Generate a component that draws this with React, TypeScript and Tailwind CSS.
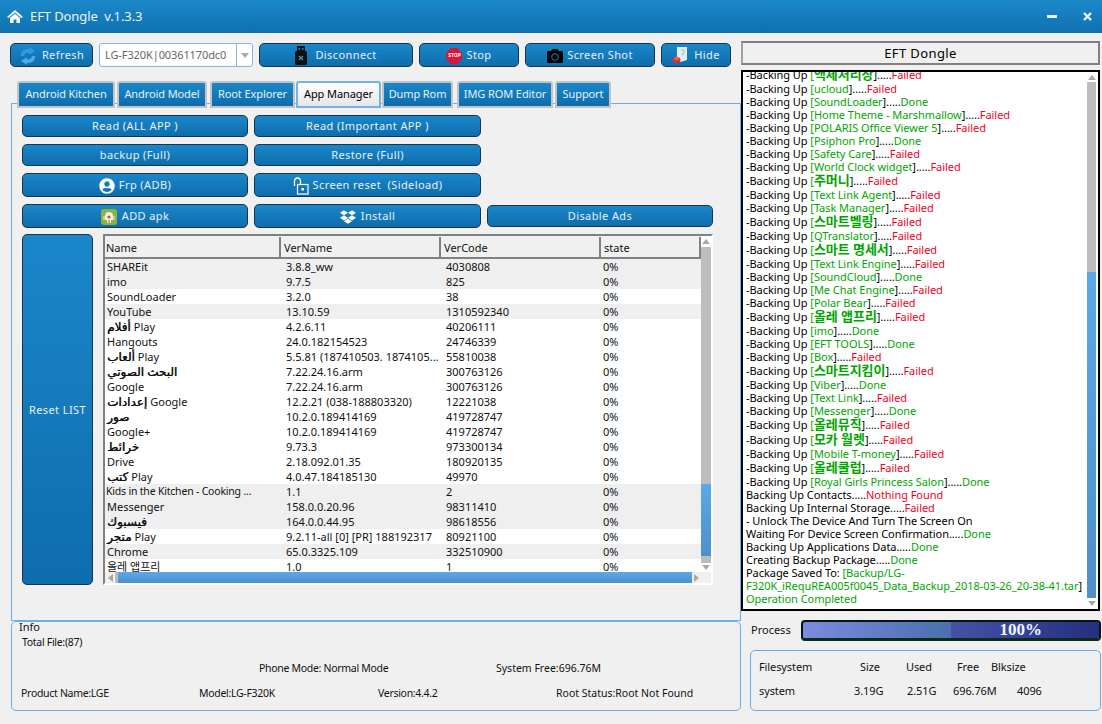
import { FaCamera, FaDropbox, FaUserCircle } from "react-icons/fa";

const font = "[font-family:'Noto_Sans','DejaVu_Sans','Noto_Sans_CJK_KR',sans-serif]";

const tabs = [
  { label: "Android Kitchen", w: "w-[98px] mr-[2px]" },
  { label: "Android Model", w: "w-[90px] mr-[3px]" },
  { label: "Root Explorer", w: "w-[85px] mr-[1px]" },
  { label: "App Manager", w: "w-[85px] mr-[1px]", active: true },
  { label: "Dump Rom", w: "w-[71px] mr-[4px]" },
  { label: "IMG ROM Editor", w: "w-[96px] mr-[2px]" },
  { label: "Support", w: "w-[56px]" },
];

const rows = [
  ["SHAREit", "3.8.8_ww", "4030808", "g"],
  ["imo", "9.7.5", "825", "g"],
  ["SoundLoader", "3.2.0", "38", "w"],
  ["YouTube", "13.10.59", "1310592340", "g"],
  ["أفلام Play", "4.2.6.11", "40206111", "w"],
  ["Hangouts", "24.0.182154523", "24746339", "w"],
  ["ألعاب Play", "5.5.81 (187410503. 1874105...", "55810038", "w"],
  ["البحث الصوتي", "7.22.24.16.arm", "300763126", "w"],
  ["Google", "7.22.24.16.arm", "300763126", "w"],
  ["إعدادات Google", "12.2.21 (038-188803320)", "12221038", "w"],
  ["صور", "10.2.0.189414169", "419728747", "w"],
  ["Google+", "10.2.0.189414169", "419728747", "w"],
  ["خرائط", "9.73.3", "973300134", "w"],
  ["Drive", "2.18.092.01.35", "180920135", "w"],
  ["كتب Play", "4.0.47.184185130", "49970", "w"],
  ["Kids in the Kitchen - Cooking ...", "1.1", "2", "g"],
  ["Messenger", "158.0.0.20.96", "98311410", "g"],
  ["فيسبوك", "164.0.0.44.95", "98618556", "g"],
  ["متجر Play", "9.2.11-all [0] [PR] 188192317", "80921100", "w"],
  ["Chrome", "65.0.3325.109", "332510900", "g"],
  ["올레 앱프리", "1.0", "1", "w"],
];

// name, status; korean names render larger in the log
const backups: [string, string, boolean?][] = [
  ["액체처리장", "Failed", true],
  ["ucloud", "Failed"],
  ["SoundLoader", "Done"],
  ["Home Theme - Marshmallow", "Failed"],
  ["POLARIS Office Viewer 5", "Failed"],
  ["Psiphon Pro", "Done"],
  ["Safety Care", "Failed"],
  ["World Clock widget", "Failed"],
  ["주머니", "Failed", true],
  ["Text Link Agent", "Failed"],
  ["Task Manager", "Failed"],
  ["스마트벨링", "Failed", true],
  ["QTranslator", "Failed"],
  ["스마트 명세서", "Failed", true],
  ["Text Link Engine", "Failed"],
  ["SoundCloud", "Done"],
  ["Me Chat Engine", "Failed"],
  ["Polar Bear", "Failed"],
  ["올레 앱프리", "Failed", true],
  ["imo", "Done"],
  ["EFT TOOLS", "Done"],
  ["Box", "Failed"],
  ["스마트지킴이", "Failed", true],
  ["Viber", "Done"],
  ["Text Link", "Failed"],
  ["Messenger", "Done"],
  ["올레뮤직", "Failed", true],
  ["모카 월렛", "Failed", true],
  ["Mobile T-money", "Failed"],
  ["올레쿨럽", "Failed", true],
  ["Royal Girls Princess Salon", "Done"],
];

function Status({ s }: { s: string }) {
  return <span className={s === "Done" ? "text-[#00a600]" : "text-[#f4001c]"}>{s}</span>;
}

function Btn({ children, className = "" }: { children: React.ReactNode; className?: string }) {
  return (
    <button className={`flex items-center justify-center whitespace-pre rounded-[5px] border border-[#1d3446] bg-gradient-to-b from-[#1a87ca] to-[#0e6dac] pt-[1px] text-[11px] tracking-[0.4px] text-[#e6f1f8] ${className}`}>
      {children}
    </button>
  );
}

function Arrow({ dir }: { dir: "up" | "down" | "left" | "right" }) {
  const cls = {
    up: "border-x-[4px] border-b-[5px] border-x-transparent border-b-[#a8a8a8]",
    down: "border-x-[4px] border-t-[5px] border-x-transparent border-t-[#a8a8a8]",
    left: "border-y-[4px] border-r-[5px] border-y-transparent border-r-[#a8a8a8]",
    right: "border-y-[4px] border-l-[5px] border-y-transparent border-l-[#a8a8a8]",
  }[dir];
  return <div className={`h-0 w-0 ${cls}`} />;
}

function RefreshIcon() {
  return (
    <svg width="18" height="18" viewBox="0 0 18 18" className="mr-[5px]">
      <path d="M2 9 L2 7 Q3 2 9 2 L10 2 L10 0 L16 4 L10 8 L10 6 Q6 5 5 9 Z" fill="#2e9ae0" />
      <path d="M16 9 L16 11 Q15 16 9 16 L8 16 L8 18 L2 14 L8 10 L8 12 Q12 13 13 9 Z" fill="#4aa9e8" />
    </svg>
  );
}

function UsbIcon() {
  return (
    <svg width="12" height="19" viewBox="0 0 12 19" className="mr-[8px]">
      <rect x="2" y="0" width="8" height="6" fill="#111" />
      <rect x="3.5" y="2" width="1.6" height="2" fill="#1a80c2" />
      <rect x="6.9" y="2" width="1.6" height="2" fill="#1a80c2" />
      <rect x="0" y="5" width="12" height="14" rx="1.5" fill="#111" />
      <path d="M4 10 L8 14 M8 10 L4 14" stroke="#4a90c0" strokeWidth="1.3" />
    </svg>
  );
}

function StopIcon() {
  return (
    <div className="relative mr-[4px] flex h-[16px] w-[16px] items-center justify-center">
      <svg width="16" height="16" viewBox="0 0 16 16" className="absolute inset-0">
        <path d="M5 0 H11 L16 5 V11 L11 16 H5 L0 11 V5 Z" fill="#dc1437" />
      </svg>
      <span className="relative text-[5px] leading-none font-bold tracking-normal text-white">STOP</span>
    </div>
  );
}

function HideIcon() {
  return (
    <svg width="16" height="17" viewBox="0 0 16 17" className="mr-[6px]">
      <path d="M5 0 H15 V13 L8 15 H5 Z" fill="#e4ecf6" />
      <path d="M9 3 Q12 2 12 5 Q12 6.5 10.5 7 V8.5" stroke="#a8bcd4" strokeWidth="1.2" fill="none" />
      <ellipse cx="4.5" cy="13" rx="4" ry="3" fill="#d8302a" />
      <ellipse cx="4.5" cy="11.5" rx="2.5" ry="1.8" fill="#f06050" />
    </svg>
  );
}

function UnlockIcon() {
  return (
    <svg width="16" height="18" viewBox="0 0 16 18" className="mr-[4px]">
      <path d="M1.5 9 V4.5 Q1.5 1 4.5 1 Q7.5 1 7.5 4.5 V7" stroke="#fff" strokeWidth="1.3" fill="none" />
      <rect x="4.5" y="7.5" width="10.5" height="9.5" stroke="#fff" strokeWidth="1.2" fill="none" />
      <rect x="8.5" y="11" width="2.5" height="2.5" fill="#fff" />
    </svg>
  );
}

function ApkIcon() {
  return (
    <svg width="16" height="16" viewBox="0 0 16 16" className="mr-[5px]">
      <rect width="16" height="16" rx="3" fill="#8cb33c" />
      <path d="M4 7 Q4 3 8 3 Q12 3 12 7 V11 H4 Z" fill="#f2f2e8" />
      <rect x="2.5" y="7" width="1" height="4" fill="#f2f2e8" />
      <rect x="12.5" y="7" width="1" height="4" fill="#f2f2e8" />
      <rect x="6" y="11" width="1.2" height="3" fill="#f2f2e8" />
      <rect x="8.8" y="11" width="1.2" height="3" fill="#f2f2e8" />
      <circle cx="8" cy="8" r="1.6" fill="#d8483c" />
    </svg>
  );
}

// arabic parts look heavier than the latin ones in the list
function AppName({ name }: { name: string }) {
  const parts = name.split(/([\u0600-\u06ff][\u0600-\u06ff ]*)/).filter(Boolean);
  return (
    <>
      {parts.map((p, i) =>
        /[\u0600-\u06ff]/.test(p) ? (
          <span key={i} className="text-[12px] [text-shadow:0.4px_0_0_#111]">{p}</span>
        ) : (
          <span key={i}>{p}</span>
        )
      )}
    </>
  );
}

function AppTable() {
  return (
    <div className="flex h-[351px] w-[610px] flex-col border-t-2 border-r-2 border-b-2 border-l-2 border-t-[#808080] border-r-white border-b-white border-l-[#808080] text-[11px] leading-[15px] text-[#111]">
      <div className="flex min-h-0 flex-1">
        <div className="w-[596px]">
          <div className="flex h-[23px] border-b-2 border-[#808080] bg-[#f0f0f0] pt-[1px]">
            <div className="flex w-[176px] items-center border-r-2 border-[#808080] pl-[1px]">Name</div>
            <div className="flex w-[160px] items-center border-r-2 border-[#808080] pl-[3px]">VerName</div>
            <div className="flex w-[160px] items-center border-r-2 border-[#808080] pl-[3px]">VerCode</div>
            <div className="flex w-[100px] items-center border-r-2 border-[#808080] pl-[3px]">state</div>
          </div>
          {rows.map((r, i) => (
            <div key={i} className={`flex h-[15px] whitespace-nowrap ${r[3] === "g" ? "bg-[#efefef]" : "bg-white"}`}>
              {i === 15 ? (
                <div className="w-[181px] overflow-hidden pl-[1px] text-[10.5px] tracking-[-0.2px]">{r[0]}</div>
              ) : (
                <div className="w-[181px] overflow-hidden pl-[2px]"><AppName name={r[0]} /></div>
              )}
              <div className="w-[160px] overflow-hidden">{r[1]}</div>
              <div className="w-[157px] overflow-hidden">{r[2]}</div>
              <div className="w-[98px]">0%</div>
            </div>
          ))}
        </div>
        <div className="flex w-[10px] flex-col bg-[#bdbdbd]">
          <div className="flex h-[11px] items-center justify-center bg-white"><Arrow dir="up" /></div>
          <div className="h-[237px]" />
          <div className="h-[72px] bg-gradient-to-b from-[#5aa9ea] to-[#4d90cc]" />
          <div className="h-[7px]" />
          <div className="flex flex-1 items-center justify-center bg-white"><Arrow dir="down" /></div>
        </div>
      </div>
      <div className="flex h-[11px] w-[596px] items-center bg-[#f0f0f0]">
        <div className="flex w-[10px] justify-center"><Arrow dir="left" /></div>
        <div className="h-full w-[3px] bg-[#bdbdbd]" />
        <div className="h-full w-[574px] bg-gradient-to-b from-[#5aa9ea] to-[#4d90cc]" />
        <div className="flex flex-1 justify-center"><Arrow dir="right" /></div>
      </div>
    </div>
  );
}

function LogLine({ children, kr }: { children: React.ReactNode; kr?: boolean }) {
  return <div className={`flex items-center whitespace-pre ${kr ? "h-[15px]" : "h-[13px]"}`}><span>{children}</span></div>;
}

function Log() {
  return (
    <div className="mt-[5px] flex h-[541px] w-[359px] border-2 border-black bg-white">
      <div className="w-[346px] overflow-hidden pl-[3px] text-[11px] leading-[13px] tracking-[-0.05px] text-black">
        <div className="-mt-[5px]">
          {backups.map(([name, status, kr], i) => (
            <LogLine key={i} kr={kr}>
              -Backing Up <span className="text-[#00a600]">[<span className={kr ? "text-[13px] font-bold" : ""}>{name}</span></span>].....<Status s={status} />
            </LogLine>
          ))}
          <LogLine>Backing Up Contacts.....<span className="text-[#f4001c]">Nothing Found</span></LogLine>
          <LogLine>Backing Up Internal Storage.....<Status s="Failed" /></LogLine>
          <LogLine>- Unlock The Device And Turn The Screen On</LogLine>
          <LogLine>Waiting For Device Screen Confirmation.....<Status s="Done" /></LogLine>
          <LogLine>Backing Up Applications Data.....<Status s="Done" /></LogLine>
          <LogLine>Creating Backup Package.....<Status s="Done" /></LogLine>
          <LogLine>Package Saved To: <span className="text-[#00a600]">[Backup/LG-</span></LogLine>
          <LogLine><span className="text-[#00a600]">F320K_iRequREA005f0045_Data_Backup_2018-03-26_20-38-41.tar</span>]</LogLine>
          <LogLine><span className="text-[#00a600]">Operation Completed</span></LogLine>
        </div>
      </div>
      <div className="flex w-[9px] flex-col bg-[#bdbdbd]">
        <div className="flex h-[10px] items-center justify-center bg-white"><Arrow dir="up" /></div>
        <div className="h-[190px]" />
        <div className="flex-1 bg-gradient-to-b from-[#5aa9ea] to-[#4d90cc]" />
        <div className="flex h-[11px] items-center justify-center bg-white"><Arrow dir="down" /></div>
      </div>
      <div className="w-[2px]" />
    </div>
  );
}

export default function App() {
  return (
    <div className={`flex h-[724px] w-[1102px] flex-col overflow-hidden bg-[#f0f0f0] ${font}`}>
      {/* title bar */}
      <div className="flex h-[33px] items-center bg-gradient-to-b from-[#1c89ca] to-[#0f71b0] text-white">
        <svg width="16" height="13" viewBox="0 0 16 13" className="ml-[7px] -mt-[1px]">
          <path d="M8 0 L16 7 L14.5 8 L8 2.5 L1.5 8 L0 7 Z M3 8 L8 3.8 L13 8 V13 H9.5 V9.5 H6.5 V13 H3 Z" fill="#fff" />
        </svg>
        <span className="ml-[7px] whitespace-pre text-[13px] tracking-[-0.1px] text-[#e8f3fa]">EFT Dongle  v.1.3.3</span>
        <div className="ml-auto mr-[26px] h-[3px] w-[10px] bg-[#e8f3fa]" />
        <svg width="9" height="9" viewBox="0 0 9 9" className="mr-[10px]">
          <path d="M1 1 L8 8 M8 1 L1 8" stroke="#eef6fb" strokeWidth="2.4" />
        </svg>
      </div>

      <div className="flex flex-1">
        {/* left column */}
        <div className="flex w-[741px] flex-col pt-[10px]">
          <div className="flex h-[24px] gap-[6px] pl-[10px]">
            <Btn className="w-[83px]"><RefreshIcon />Refresh</Btn>
            <div className="flex w-[154px] items-center rounded-[3px] border border-[#7fb8e8] bg-white text-[11px] tracking-[-0.1px] text-[#666]">
              <div className="w-[136px] pr-[10px] pl-[5px]">
                <div className="overflow-hidden whitespace-nowrap">LG-F320K|00361170dc0t</div>
              </div>
              <div className="flex h-full flex-1 items-center justify-center border-l border-[#7fb8e8]"><Arrow dir="down" /></div>
            </div>
            <Btn className="w-[154px]"><UsbIcon />Disconnect</Btn>
            <Btn className="w-[100px]"><StopIcon />Stop</Btn>
            <Btn className="w-[130px]"><FaCamera className="mr-[4px] text-[16px] text-black" />Screen Shot</Btn>
            <Btn className="w-[70px]"><HideIcon />Hide</Btn>
          </div>

          <div className="relative z-10 mt-[14px] flex h-[27px] pl-[17px]">
            {tabs.map((t) =>
              t.active ? (
                <div key={t.label} className={`${t.w} flex items-center justify-center rounded-t-[3px] border-2 border-[#72b2e8] bg-gradient-to-b from-white to-[#e6e6e6] text-[11px] tracking-[-0.1px] text-black`}>
                  {t.label}
                </div>
              ) : (
                <div key={t.label} className={`${t.w} flex items-center justify-center rounded-t-[3px] border-2 border-[#c4c4c4] bg-gradient-to-b from-[#1a87ca] to-[#0e6dac] text-[11px] tracking-[-0.1px] text-[#e6f1f8]`}>
                  {t.label}
                </div>
              )
            )}
          </div>

          {/* app manager pane */}
          <div className="-mt-[5px] ml-[11px] h-[518px] border border-[#6aaee6] pt-[11px] pl-[10px]">
            <div className="grid grid-cols-[226px_227px_226px] grid-rows-[22px_22px_24px_24px] gap-x-[6px] gap-y-[7px]">
              <Btn>Read (ALL APP )</Btn>
              <Btn>Read (Important APP )</Btn>
              <div />
              <Btn>backup (Full)</Btn>
              <Btn>Restore (Full)</Btn>
              <div />
              <Btn><FaUserCircle className="mr-[4px] text-[16px] text-white" />Frp (ADB)</Btn>
              <Btn><UnlockIcon />Screen reset  (Sideload)</Btn>
              <div />
              <Btn><ApkIcon />ADD apk</Btn>
              <Btn><FaDropbox className="mr-[5px] text-[16px] text-white" />Install</Btn>
              <Btn className="h-[22px] self-center">Disable Ads</Btn>
            </div>
            <div className="mt-[6px] flex gap-[10px]">
              <Btn className="h-[351px] w-[71px]">Reset LIST</Btn>
              <AppTable />
            </div>
          </div>

          {/* info */}
          <div className="ml-[11px] h-[90px] rounded-[5px] border border-[#6aaee6] text-[10.5px] leading-[14px] tracking-[-0.3px] text-[#111]">
            <div className="-mt-[2px] pl-[7px] text-[11px] leading-[13px] tracking-normal">Info</div>
            <div className="pl-[10px] pt-[2px]">Total File:(87)</div>
            <div className="mt-[12px] flex pl-[247px]">
              <span className="w-[237px]">Phone Mode: Normal Mode</span>
              <span className="tracking-normal">System Free:696.76M</span>
            </div>
            <div className="mt-[11px] flex pl-[9px]">
              <span className="w-[178px]">Product Name:LGE</span>
              <span className="w-[179px]">Model:LG-F320K</span>
              <span className="w-[178px]">Version:4.4.2</span>
              <span className="tracking-normal">Root Status:Root Not Found</span>
            </div>
          </div>
        </div>

        {/* right column */}
        <div className="flex w-[361px] flex-col pt-[8px]">
          <div className="flex h-[24px] w-[359px] items-center justify-center border-2 border-t-[#808080] border-r-[#808080] border-b-[#808080] border-l-[#a0a0a0] bg-[#f0f0f0] pt-[2px] text-[13px] tracking-[0.4px] text-black">
            EFT Dongle
          </div>
          <Log />
          <div className="mt-[9px] flex h-[21px] items-center pl-[10px]">
            <span className="w-[50px] text-[11px] text-[#111]">Process</span>
            <div className="relative flex h-[21px] w-[300px] items-center justify-end overflow-hidden rounded-[4px] border-2 border-b-[3px] border-[#06160e] border-b-[#0b2a18] bg-gradient-to-r from-[#7c8ae0] via-[#4a70ae] via-50% to-[#4a70ae] pr-[57px]">
              <div className="absolute inset-y-0 right-0 w-1/2 bg-gradient-to-r from-[#4552a6] to-[#262f80]" />
              <span className="relative font-['Liberation_Serif',serif] text-[17px] font-bold text-[#f2f4ff]">100%</span>
            </div>
          </div>
          <div className="mt-[9px] ml-[9px] h-[61px] w-[351px] rounded-[5px] border border-[#6aaee6] pt-[9px] pl-[8px] text-[11px] leading-[14px] tracking-[-0.1px] text-[#111]">
            <div className="flex">
              <span className="w-[101px]">Filesystem</span>
              <span className="w-[46px]">Size</span>
              <span className="w-[51px]">Used</span>
              <span className="w-[34px]">Free</span>
              <span>Blksize</span>
            </div>
            <div className="mt-[10px] flex">
              <span className="w-[95px]">system</span>
              <span className="w-[53px]">3.19G</span>
              <span className="w-[46px]">2.51G</span>
              <span className="w-[64px]">696.76M</span>
              <span>4096</span>
            </div>
          </div>
        </div>
      </div>
    </div>
  );
}
